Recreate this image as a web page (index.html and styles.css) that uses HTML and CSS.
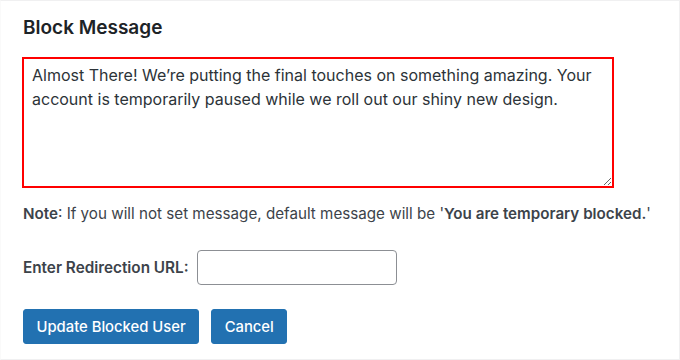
FILE: index.html
```html
<!DOCTYPE html>
<html>
<head>
<meta charset="utf-8">
<link rel="stylesheet" href="styles.css">
</head>
<body>
<div class="panel">
  <h2 class="title">Block Message</h2>
  <textarea class="message">Almost There! We’re putting the final touches on something amazing. Your account is temporarily paused while we roll out our shiny new design.</textarea>
  <p class="note"><strong>Note</strong>: If you will not set message, default message will be '<strong>You are temporary blocked.</strong>'</p>
  <div class="url-row">
    <label class="url-label" for="url">Enter Redirection URL:</label>
    <input class="url-input" id="url" type="text">
  </div>
  <div class="actions">
    <button class="btn">Update Blocked User</button>
    <button class="btn">Cancel</button>
  </div>
</div>
</body>
</html>
```
FILE: styles.css
```css
html, body {
  margin: 0;
  padding: 0;
  background: #fff;
}
body {
  font-family: Inter, "Noto Sans", sans-serif;
  color: #3c434a;
}
.panel {
  box-sizing: border-box;
  width: 680px;
  height: 360px;
  border: 1px solid #f0f0f1;
  border-left-color: #fafafa;
  padding: 14px 0 0 22px;
}
.title {
  margin: 0;
  font-size: 19px;
  font-weight: 600;
  line-height: 26px;
  color: #1d2327;
}
.message {
  display: block;
  box-sizing: border-box;
  margin: 16px 0 0 -1px;
  width: 592px;
  height: 131px;
  border: 2px solid #ff0000;
  border-radius: 0;
  padding: 4px 8px;
  font-family: Inter, "Noto Sans", sans-serif;
  font-size: 16px;
  line-height: 24px;
  color: #2c3338;
  resize: vertical;
  outline: none;
}
.note {
  margin: 16px 0 0;
  font-size: 15.2px;
  line-height: 20px;
}
.note strong {
  font-weight: 600;
}
.url-row {
  display: flex;
  align-items: center;
  gap: 8px;
  margin-top: 26px;
}
.url-label {
  font-size: 15.3px;
  font-weight: 600;
}
.url-input {
  box-sizing: border-box;
  width: 200px;
  height: 35px;
  border: 1px solid #8c8f94;
  border-radius: 4px;
  padding: 0 8px;
}
.actions {
  display: flex;
  gap: 12px;
  margin-top: 24px;
}
.btn {
  box-sizing: border-box;
  height: 35px;
  padding: 0 12.5px;
  border: 1px solid #2271b1;
  border-radius: 3px;
  background: #2271b1;
  color: #fff;
  font-family: Inter, "Noto Sans", sans-serif;
  font-size: 14.8px;
  font-weight: 500;
}
```
